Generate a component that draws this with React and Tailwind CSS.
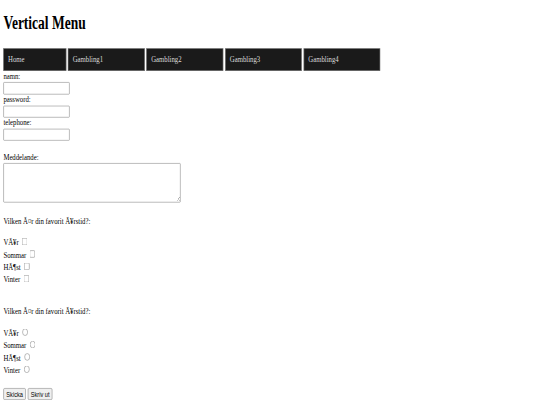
import React from 'react';

const menu = ['Home', 'Gambling1', 'Gambling2', 'Gambling3', 'Gambling4'];
const seasons = ['VÃ¥r', 'Sommar', 'HÃ¶st', 'Vinter'];
const fields = ['namn:', 'password:', 'telephone:'];

const SeasonList = ({ type }) => (
    <div className="mt-[17.6px]">
        {seasons.map((s) => (
            <div key={s} className="h-[22px] leading-[22px]">
                {s}{' '}
                <input
                    type={type}
                    name={type === 'radio' ? 'season' : undefined}
                    className={type === 'radio'
                        ? 'inline-block w-[13px] h-[13px] m-[3px_3px_0_5px] align-baseline rounded-full'
                        : 'inline-block w-[13px] h-[13px] m-[3px_3px_3px_4px] align-baseline rounded-[2px]'}
                />
            </div>
        ))}
    </div>
);

export default function App() {
    return (
        <div className="w-[540px] h-[405px] overflow-hidden bg-white">
            {/* page laid out at 1280x720, squeezed into the window */}
            <div className="w-[1280px] h-[720px] origin-top-left scale-x-[0.421875] scale-y-[0.5625] px-[8px] font-['Liberation_Serif',serif] text-[16px] leading-[18.4px] text-black">
                <h1 className="pt-[22px] text-[32px] leading-[36.8px] font-bold">Vertical Menu</h1>

                <ul className="mt-[27.2px] flex gap-[4.7px]">
                    {menu.map((item) => (
                        <li key={item} className="bg-[#1a1a1a] border border-[#8a8a8a] pl-[10px] pr-[97.5px] py-[10px] text-[#dcdcdc]">
                            {item}
                        </li>
                    ))}
                </ul>

                <form>
                    {fields.map((f) => (
                        <div key={f}>
                            <label className="block">{f}</label>
                            <input type="text" className="block mt-[1.5px] w-[157px] h-[21.3px] border border-[#767676] rounded-[2px] bg-white" />
                        </div>
                    ))}

                    <label className="block mt-[21.4px]">Meddelande:</label>
                    <textarea className="block mt-[0.6px] w-[420px] h-[70px] border border-[#767676] rounded-[2px] bg-white" />

                    <p className="mt-[24px]">Vilken Ã¤r din favorit Ã¥rstid?:</p>
                    <SeasonList type="checkbox" />

                    <p className="mt-[37px]">Vilken Ã¤r din favorit Ã¥rstid?:</p>
                    <SeasonList type="radio" />

                    <div className="mt-[20.6px] flex gap-[4.6px] font-['Liberation_Sans',Arial,sans-serif] text-[13.33px] leading-[15.3px]">
                        <button type="button" className="px-[6px] py-[1px] bg-[#efefef] border border-[#767676] rounded-[3px] h-[21px]">Skicka</button>
                        <button type="button" className="px-[6px] py-[1px] bg-[#efefef] border border-[#767676] rounded-[3px] h-[21px]">Skriv ut</button>
                    </div>
                </form>
            </div>
        </div>
    );
}
